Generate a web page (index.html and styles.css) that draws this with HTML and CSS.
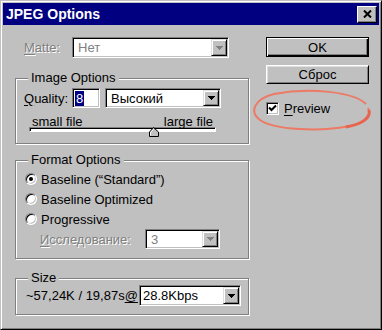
FILE: index.html
```html
<!DOCTYPE html>
<html>

<head>
    <title>JPEG Options</title>
    <link rel="stylesheet" href="styles.css">
</head>

<body>
    <div class="window">
        <div class="titlebar">
            <span class="title">JPEG Options</span>
            <span class="close-btn">
                <svg width="9" height="8" viewBox="0 0 9 8">
                    <path d="M1 0.5 L8 7.5 M8 0.5 L1 7.5" stroke="#000" stroke-width="2" />
                </svg>
            </span>
        </div>

        <div class="dialog">
            <div class="left-col">
                <!-- Matte -->
                <div class="matte-row">
                    <span class="lbl disabled"><u>M</u>atte:</span>
                    <div class="combo combo-matte">
                        <span class="combo-text disabled">Нет</span>
                        <span class="combo-btn"><svg class="arrow arrow-off" width="7" height="4" viewBox="0 0 7 4"><path d="M0 0h7v1h-1v1h-1v1h-1v1h-1v-1h-1v-1h-1v-1h-1z" /></svg></span>
                    </div>
                </div>

                <fieldset class="group image-group">
                    <legend>Image Options</legend>
                    <div class="quality-row">
                        <span class="lbl"><u>Q</u>uality:</span>
                        <div class="text-input"><span class="selected">8</span></div>
                        <div class="combo combo-quality">
                            <span class="combo-text">Высокий</span>
                            <span class="combo-btn"><svg class="arrow" width="7" height="4" viewBox="0 0 7 4"><path d="M0 0h7v1h-1v1h-1v1h-1v1h-1v-1h-1v-1h-1v-1h-1z" /></svg></span>
                        </div>
                    </div>
                    <div class="slider">
                        <div class="slider-labels">
                            <span>small file</span>
                            <span>large file</span>
                        </div>
                        <div class="track"></div>
                        <svg class="thumb" width="10" height="10" viewBox="0 0 10 10">
                            <path d="M4.5 0.5 L9.5 5 V9.5 H0.5 V5 Z" fill="#c0c0c0" stroke="#000" />
                            <path d="M1.5 8.5 V5.4 L4.5 2.3" fill="none" stroke="#fff" />
                        </svg>
                    </div>
                </fieldset>

                <fieldset class="group format-group">
                    <legend>Format Options</legend>
                    <div class="radio-row">
                        <span class="radio checked"></span>
                        <span>Baseline (“Standard”)</span>
                    </div>
                    <div class="radio-row">
                        <span class="radio"></span>
                        <span>Baseline Optimized</span>
                    </div>
                    <div class="radio-row">
                        <span class="radio"></span>
                        <span>Progressive</span>
                    </div>
                    <div class="scans-row">
                        <span class="scans-lbl disabled"><u>И</u>сследование:</span>
                        <div class="combo combo-scans">
                            <span class="combo-text disabled">3</span>
                            <span class="combo-btn"><svg class="arrow arrow-off" width="7" height="4" viewBox="0 0 7 4"><path d="M0 0h7v1h-1v1h-1v1h-1v1h-1v-1h-1v-1h-1v-1h-1z" /></svg></span>
                        </div>
                    </div>
                </fieldset>

                <fieldset class="group size-group">
                    <legend>Size</legend>
                    <div class="size-row">
                        <span>~57,24K / 19,87s<u>@</u></span>
                        <div class="combo combo-speed">
                            <span class="combo-text">28.8Kbps</span>
                            <span class="combo-btn"><svg class="arrow" width="7" height="4" viewBox="0 0 7 4"><path d="M0 0h7v1h-1v1h-1v1h-1v1h-1v-1h-1v-1h-1v-1h-1z" /></svg></span>
                        </div>
                    </div>
                </fieldset>
            </div>

            <div class="right-col">
                <div class="btn btn-default">OK</div>
                <div class="btn btn-reset">Сброс</div>
                <div class="preview-row">
                    <span class="checkbox">
                        <svg width="9" height="9" viewBox="0 0 9 9">
                            <path d="M1 3.5 L3.5 6 L8 1.5" fill="none" stroke="#000" stroke-width="2" />
                        </svg>
                    </span>
                    <span><u>P</u>review</span>
                </div>
                <!-- hand drawn marker round the checkbox -->
                <svg class="marker" width="124" height="44" viewBox="0 0 124 44">
                    <path d="M116 16 C104 4 60 -1 24 6 C4 11 -1 24 10 32 C24 42 70 44 100 38 C116 35 122 28 118 20"
                        fill="none" stroke="#ec7a64" stroke-width="2" />
                    <path d="M96 39 C112 36 121 30 119 22" fill="none" stroke="#e8644c" stroke-width="3" />
                </svg>
            </div>
        </div>
    </div>
</body>

</html>
```

FILE: styles.css
```css
* {
    box-sizing: border-box;
}

body {
    margin: 0;
    font-family: "Liberation Sans", Arial, sans-serif;
    font-size: 13px;
    color: #000;
    background-color: #c0c0c0;
}

u {
    text-decoration: underline;
    text-underline-offset: 2px;
}

.window {
    width: 382px;
    height: 330px;
    padding: 2px;
    background-color: #c0c0c0;
    border: 1px solid;
    border-color: #c0c0c0 #000 #000 #c0c0c0;
    box-shadow: inset 1px 1px 0 #fff, inset -1px -1px 0 #808080;
}

.titlebar {
    height: 22px;
    display: flex;
    align-items: center;
    justify-content: space-between;
    padding: 0 2px 0 3px;
    background-color: #000080;
    color: #fff;
}

.title {
    font-size: 14px;
    font-weight: bold;
}

.close-btn {
    width: 20px;
    height: 17px;
    display: flex;
    align-items: center;
    justify-content: center;
    background-color: #c0c0c0;
    border: 1px solid;
    border-color: #fff #000 #000 #fff;
    box-shadow: inset -1px -1px 0 #808080;
}

.dialog {
    display: grid;
    grid-template-columns: 234px 103px;
    column-gap: 17px;
    padding: 12px 0 0 12px;
}

.disabled {
    color: #808080;
    text-shadow: 1px 1px 0 #fff;
}

.lbl {
    width: 48px;
}

/* sunken fields */
.combo,
.text-input,
.checkbox {
    background-color: #fff;
    border: 1px solid;
    border-color: #808080 #fff #fff #808080;
    box-shadow: inset 1px 1px 0 #000, inset -1px -1px 0 #c0c0c0;
}

.combo {
    display: flex;
    padding: 1px;
}

.combo-text {
    flex: 1;
    padding-left: 4px;
    display: flex;
    align-items: center;
}

.combo-btn {
    width: 16px;
    display: flex;
    align-items: center;
    justify-content: center;
    background-color: #c0c0c0;
    border: 1px solid;
    border-color: #dfdfdf #000 #000 #dfdfdf;
    box-shadow: inset 1px 1px 0 #fff, inset -1px -1px 0 #808080;
}

.arrow path {
    fill: #000;
}

.arrow-off path {
    fill: #808080;
}

.matte-row {
    height: 21px;
    display: flex;
    align-items: center;
    padding-left: 9px;
}

.combo-matte {
    width: 157px;
    height: 21px;
}

/* group boxes */
.group {
    margin: 0;
    min-width: 0;
    border: 1px solid #808080;
    box-shadow: 1px 1px 0 #fff, inset 1px 1px 0 #fff;
}

.group legend {
    margin-left: 5px;
    padding: 0 3px;
    line-height: 14px;
    background-color: #c0c0c0;
}

.image-group {
    margin-top: 13px;
    padding: 3px 7px 11px;
}

.format-group {
    margin-top: 9px;
    padding: 2px 7px 9px;
}

.size-group {
    margin-top: 12px;
    padding: 0 7px 8px;
}

.quality-row {
    height: 20px;
    display: flex;
    align-items: center;
    padding-left: 1px;
}

.text-input {
    width: 28px;
    height: 20px;
    padding: 2px 0 0 2px;
}

.selected {
    display: inline-block;
    padding: 0 1px;
    line-height: 15px;
    background-color: #000080;
    color: #fff;
}

.combo-quality {
    width: 116px;
    height: 20px;
    margin-left: 5px;
}

.slider {
    position: relative;
    width: 187px;
    margin: 9px 0 0 6px;
}

.slider-labels {
    display: flex;
    justify-content: space-between;
    padding: 0 3px;
    line-height: 10px;
}

.track {
    height: 5px;
    background-color: #fff;
    border: 1px solid;
    border-color: #808080 #fff #fff #808080;
    box-shadow: inset 1px 1px 0 #000;
}

.thumb {
    position: absolute;
    left: 120px;
    top: 10px;
}

.radio-row {
    height: 20px;
    display: flex;
    align-items: center;
    gap: 4px;
    padding-left: 2px;
}

.radio {
    width: 12px;
    height: 12px;
    display: flex;
    align-items: center;
    justify-content: center;
    border-radius: 50%;
    background-color: #fff;
    border: 1px solid;
    border-color: #808080 #fff #fff #808080;
    box-shadow: inset 1px 1px 0 #000, inset -1px -1px 0 #c0c0c0;
}

.radio.checked::after {
    content: "";
    width: 4px;
    height: 4px;
    border-radius: 50%;
    background-color: #000;
}

.scans-row {
    height: 20px;
    display: flex;
    align-items: center;
    padding-left: 17px;
}

.scans-lbl {
    width: 105px;
}

.combo-scans {
    width: 75px;
    height: 20px;
}

.size-row {
    height: 21px;
    display: flex;
    align-items: center;
    padding-left: 3px;
}

.combo-speed {
    width: 102px;
    height: 21px;
    margin-left: auto;
}

.combo-speed .combo-text {
    padding-left: 2px;
}

/* buttons */
.right-col {
    position: relative;
    display: flex;
    flex-direction: column;
}

.btn {
    display: flex;
    align-items: center;
    justify-content: center;
    background-color: #c0c0c0;
    border: 1px solid;
    border-color: #fff #000 #000 #fff;
    box-shadow: inset 1px 1px 0 #dfdfdf, inset -1px -1px 0 #808080;
}

.btn-default {
    height: 20px;
    border-color: #000;
    box-shadow: inset 1px 1px 0 #fff, inset -1px -1px 0 #000, inset -2px -2px 0 #808080;
}

.btn-reset {
    height: 19px;
    margin-top: 8px;
}

.preview-row {
    display: flex;
    align-items: center;
    gap: 5px;
    margin-top: 17px;
}

.checkbox {
    width: 13px;
    height: 13px;
    display: flex;
    align-items: center;
    justify-content: center;
}

.marker {
    position: absolute;
    left: -16px;
    top: 51px;
}
```
